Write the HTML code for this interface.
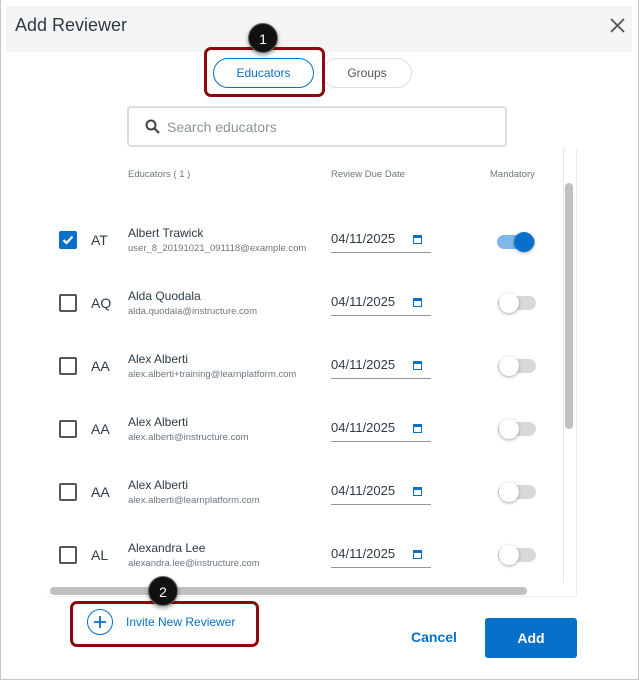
<!DOCTYPE html>
<html><head><meta charset="utf-8">
<style>
*{box-sizing:border-box;margin:0;padding:0}
body{width:639px;height:680px;background:#fff;font-family:"Liberation Sans",sans-serif;position:relative;overflow:hidden;color:#2d3b45}
.a{position:absolute}
.frame{left:0;top:0;width:639px;height:680px;border:1px solid #c7c7c7;border-top:none}
.hdr{left:6px;top:6px;width:626px;height:46px;background:#f5f5f5}
.cb{width:18px;height:18px;border:2px solid #555;border-radius:2px;background:#fff}
.ini{font-size:14px;color:#2d3b45}
.nm{font-size:12px;color:#2d3b45}
.em{font-size:9.5px;color:#6b7780}
.dt{font-size:13px;color:#2d3b45;width:100px;height:22px;border-bottom:1px solid #8b969e}
.cal{width:9px;height:9px;border:1.5px solid #0770c9;border-top-width:3px}
.trk{width:38px;height:14px;border-radius:7px;background:#d8d8d8}
.knob{width:20px;height:20px;border-radius:50%;background:#fff;box-shadow:0 1px 3px rgba(0,0,0,.35)}
.badge{width:30px;height:30px;border-radius:50%;background:#111;color:#fff;font-size:14px;text-align:center;line-height:30px;box-shadow:0 2px 4px rgba(0,0,0,.4);border:1px solid #666}
.red{border:3px solid #8b0a0f;border-radius:7px}
</style></head><body>
<div class="a frame"></div>
<div class="a hdr"></div>
<div class="a" style="left:15px;top:15px;font-size:18px;color:#2d3b45">Add Reviewer</div>
<svg class="a" style="left:610px;top:18px" width="15" height="15" viewBox="0 0 15 15"><path d="M1 1L14 14M14 1L1 14" stroke="#555" stroke-width="1.8"/></svg>

<div class="a" style="left:213px;top:58px;width:101px;height:30px;border:1px solid #0770c9;border-radius:15px;color:#0770c9;font-size:12px;text-align:center;line-height:28px">Educators</div>
<div class="a" style="left:322px;top:58px;width:90px;height:30px;border:1px solid #ddd;border-radius:15px;color:#555;font-size:12px;text-align:center;line-height:28px">Groups</div>
<div class="a red" style="left:204px;top:47px;width:121px;height:50px"></div>
<div class="a badge" style="left:248px;top:23px">1</div>

<div class="a" style="left:127px;top:106px;width:380px;height:41px;border:2px solid #dcdcdc;border-radius:4px"></div>
<svg class="a" style="left:145px;top:119px" width="15" height="15" viewBox="0 0 15 15"><circle cx="6" cy="6" r="4.5" stroke="#444" stroke-width="2" fill="none"/><path d="M9.5 9.5L14 14" stroke="#444" stroke-width="2.2"/></svg>
<div class="a" style="left:167px;top:119px;font-size:14px;color:#8b969e">Search educators</div>

<div class="a" style="left:46px;top:148px;width:531px;height:449px;border-right:1px solid #eee;border-bottom:1px solid #eee"></div>
<div class="a" style="left:563px;top:148px;width:1px;height:435px;background:#e6e6e6"></div>
<div class="a" style="left:565px;top:183px;width:8px;height:246px;border-radius:4px;background:#c1c1c1"></div>
<div class="a" style="left:50px;top:587px;width:477px;height:8px;border-radius:4px;background:#c1c1c1"></div>

<div class="a" style="left:128px;top:169px;font-size:9.5px;color:#6b7780">Educators ( 1 )</div>
<div class="a" style="left:331px;top:169px;font-size:9.5px;color:#6b7780">Review Due Date</div>
<div class="a" style="left:490px;top:169px;font-size:9.5px;color:#6b7780">Mandatory</div>

<!-- rows -->
<div class="a cb" style="left:59px;top:231px;background:#0770c9;border-color:#0770c9"></div>
<svg class="a" style="left:61px;top:233px" width="14" height="14" viewBox="0 0 14 14"><path d="M2.5 7L5.5 10L11.5 3.5" stroke="#fff" stroke-width="2.2" fill="none"/></svg>
<div class="a ini" style="left:91px;top:232px">AT</div>
<div class="a nm" style="left:128px;top:226px">Albert Trawick</div>
<div class="a em" style="left:128px;top:243px">user_8_20191021_091118@example.com</div>
<div class="a dt" style="left:331px;top:231px">04/11/2025</div>
<div class="a cal" style="left:413px;top:235px"></div>
<div class="a trk" style="left:497px;top:235px;background:#7fb8e6"></div>
<div class="a knob" style="left:514px;top:232px;background:#0770c9"></div>

<div class="a cb" style="left:59px;top:294px"></div>
<div class="a ini" style="left:91px;top:295px">AQ</div>
<div class="a nm" style="left:128px;top:289px">Alda Quodala</div>
<div class="a em" style="left:128px;top:306px">alda.quodala@instructure.com</div>
<div class="a dt" style="left:331px;top:294px">04/11/2025</div>
<div class="a cal" style="left:413px;top:298px"></div>
<div class="a trk" style="left:498px;top:296px"></div>
<div class="a knob" style="left:499px;top:293px"></div>

<div class="a cb" style="left:59px;top:357px"></div>
<div class="a ini" style="left:91px;top:358px">AA</div>
<div class="a nm" style="left:128px;top:352px">Alex Alberti</div>
<div class="a em" style="left:128px;top:369px">alex.alberti+training@learnplatform.com</div>
<div class="a dt" style="left:331px;top:357px">04/11/2025</div>
<div class="a cal" style="left:413px;top:361px"></div>
<div class="a trk" style="left:498px;top:359px"></div>
<div class="a knob" style="left:499px;top:356px"></div>

<div class="a cb" style="left:59px;top:420px"></div>
<div class="a ini" style="left:91px;top:421px">AA</div>
<div class="a nm" style="left:128px;top:415px">Alex Alberti</div>
<div class="a em" style="left:128px;top:432px">alex.alberti@instructure.com</div>
<div class="a dt" style="left:331px;top:420px">04/11/2025</div>
<div class="a cal" style="left:413px;top:424px"></div>
<div class="a trk" style="left:498px;top:422px"></div>
<div class="a knob" style="left:499px;top:419px"></div>

<div class="a cb" style="left:59px;top:483px"></div>
<div class="a ini" style="left:91px;top:484px">AA</div>
<div class="a nm" style="left:128px;top:478px">Alex Alberti</div>
<div class="a em" style="left:128px;top:495px">alex.alberti@learnplatform.com</div>
<div class="a dt" style="left:331px;top:483px">04/11/2025</div>
<div class="a cal" style="left:413px;top:487px"></div>
<div class="a trk" style="left:498px;top:485px"></div>
<div class="a knob" style="left:499px;top:482px"></div>

<div class="a cb" style="left:59px;top:546px"></div>
<div class="a ini" style="left:91px;top:547px">AL</div>
<div class="a nm" style="left:128px;top:541px">Alexandra Lee</div>
<div class="a em" style="left:128px;top:558px">alexandra.lee@instructure.com</div>
<div class="a dt" style="left:331px;top:546px">04/11/2025</div>
<div class="a cal" style="left:413px;top:550px"></div>
<div class="a trk" style="left:498px;top:548px"></div>
<div class="a knob" style="left:499px;top:545px"></div>

<!-- footer -->
<div class="a red" style="left:70px;top:601px;width:189px;height:46px"></div>
<div class="a badge" style="left:148px;top:576px">2</div>
<svg class="a" style="left:86px;top:608px" width="28" height="28" viewBox="0 0 28 28"><circle cx="14" cy="14" r="12.5" stroke="#0770c9" stroke-width="1" fill="none"/><path d="M14 8V20M8 14H20" stroke="#0770c9" stroke-width="1.8"/></svg>
<div class="a" style="left:126px;top:615px;font-size:12px;color:#0770c9">Invite New Reviewer</div>
<div class="a" style="left:411px;top:629px;font-size:14px;color:#0770c9;font-weight:bold">Cancel</div>
<div class="a" style="left:485px;top:618px;width:92px;height:40px;background:#0770c9;border-radius:3px;color:#fff;font-size:14px;font-weight:bold;text-align:center;line-height:40px">Add</div>
</body></html>
